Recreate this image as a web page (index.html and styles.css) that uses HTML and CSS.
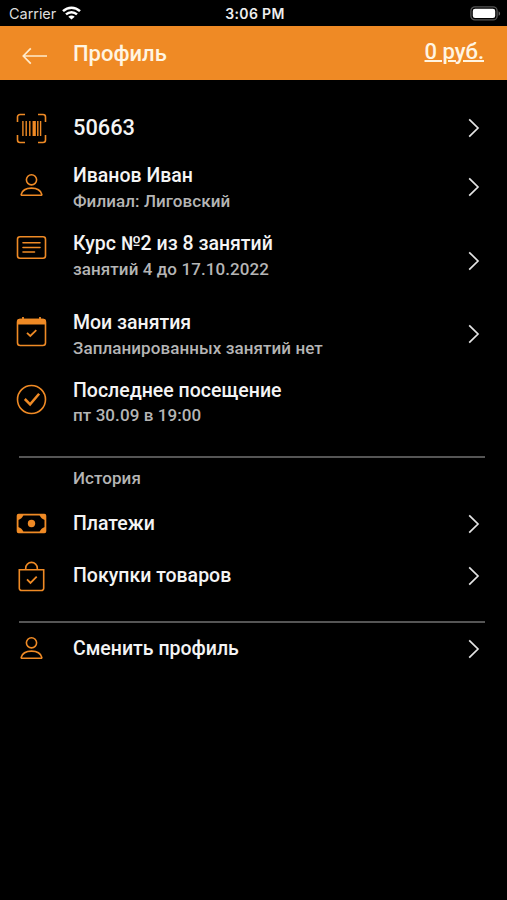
FILE: index.html
```html
<!DOCTYPE html>
<html lang="ru">
<head>
<meta charset="utf-8">
<title>Профиль</title>
<link rel="stylesheet" href="styles.css">
</head>
<body>
<svg width="0" height="0" class="defs">
  <symbol id="chevron" viewBox="0 0 12 20"><path d="M1.2 1.3 10 10 1.2 18.7"/></symbol>
  <symbol id="person" viewBox="0 0 31 31"><circle cx="15.500" cy="9.800" r="5.100"/><path d="M5.800 25.200c-.4 0-.7-.3-.6-.8 1-3.900 5-6.300 10.300-6.300s9.300 2.400 10.300 6.300c.1.500-.2.800-.6.800z"/></symbol>
</svg>
<div class="status">
  <div class="carrier"><span>Carrier</span>
    <svg class="wifi" width="19" height="14" viewBox="0 0 19 14"><path d="M1 5.200C5.900.5 13.100.5 18 5.200" /><path d="M4 8.400c3.200-2.900 7.800-2.900 11 0"/><path class="dot" d="M9.500 13.600 6.300 10.700c1.800-1.600 4.600-1.600 6.400 0z"/></svg>
  </div>
  <div class="time">3:06 PM</div>
  <svg class="battery" width="31" height="15" viewBox="0 0 31 15"><rect class="shell" x=".9" y=".9" width="26.200" height="13" rx="4"/><rect class="charge" x="2.800" y="2.700" width="22.400" height="9.400" rx="2.300"/><path class="cap" d="M28.600 5.200c2 .9 2 3.700 0 4.600z"/></svg>
</div>
<header class="bar">
  <svg class="back" width="26" height="18" viewBox="0 0 26 18"><path d="M8.800 1.300 1.300 9l7.500 7.700M1.300 9H25"/></svg>
  <h1>Профиль</h1>
  <a class="balance">0 руб.</a>
</header>
<main>
  <div class="row code">
    <svg class="icon" viewBox="0 0 31 31"><path d="M1.500 9V4a2.500 2.500 0 0 1 2.500-2.500h5M22 1.500h5A2.500 2.500 0 0 1 29.500 4v5M29.500 22v5a2.500 2.500 0 0 1-2.500 2.500h-5M9 29.500H4A2.500 2.500 0 0 1 1.500 27v-5"/><path d="M6.900 8v15M10.200 8v15M13.800 8v15M21.800 8v15M24.600 8v15" stroke-width="1.400"/><path d="M18.200 8v15" stroke-width="3.300"/></svg>
    <div class="text"><b>50663</b></div>
    <svg class="arrow"><use href="#chevron"/></svg>
  </div>
  <div class="row client">
    <svg class="icon"><use href="#person"/></svg>
    <div class="text"><b>Иванов Иван</b><small>Филиал: Лиговский</small></div>
    <svg class="arrow"><use href="#chevron"/></svg>
  </div>
  <div class="row course">
    <svg class="icon" viewBox="0 0 31 31"><rect x="1.500" y="4.800" width="28" height="21.500" rx="2.500"/><path d="M7 10.800h17M7 15.500h17M7 20h11.500" stroke-linecap="round"/></svg>
    <div class="text"><b>Курс №2 из 8 занятий</b><small>занятий 4 до 17.10.2022</small></div>
    <svg class="arrow"><use href="#chevron"/></svg>
  </div>
  <div class="row lessons">
    <svg class="icon" viewBox="0 0 31 31"><rect x="1.500" y="3.500" width="28" height="26" rx="2.800"/><path class="solid" d="M1 8.500V5a2.500 2.500 0 0 1 2.500-2.300h2.600v-1.700h1.800v1.700h15.200v-1.700h1.800v1.700h2.600A2.500 2.500 0 0 1 30 5v3.500z"/><path d="m11 16.800 3.300 3.200 6-5.800" stroke-width="1.800"/></svg>
    <div class="text"><b>Мои занятия</b><small>Запланированных занятий нет</small></div>
    <svg class="arrow"><use href="#chevron"/></svg>
  </div>
  <div class="row visit">
    <svg class="icon" viewBox="0 0 31 31"><circle cx="15.500" cy="15.500" r="14"/><path d="m8.800 15 5.300 5.300 9-10.500" stroke-width="2.500"/></svg>
    <div class="text"><b>Последнее посещение</b><small>пт 30.09 в 19:00</small></div>
  </div>
  <hr>
  <h2>История</h2>
  <div class="row payments">
    <svg class="icon" viewBox="0 0 31 31"><rect x="1.600" y="6.700" width="27.800" height="17.600" rx="1" stroke-width="1.800"/><path class="solid" d="M2 7h5.500Q6 11 2 12zM29 7h-5.500q1.500 4 5.500 5zM2 24h5.500Q6 20 2 19zM29 24h-5.500q1.500-4 5.500-5z"/><circle class="solid" cx="15.500" cy="15.500" r="3.700"/></svg>
    <div class="text"><b>Платежи</b></div>
    <svg class="arrow"><use href="#chevron"/></svg>
  </div>
  <div class="row purchases">
    <svg class="icon" viewBox="0 0 31 31"><path d="M3.300 8.700h24.400v18.500a2.300 2.300 0 0 1-2.300 2.300H5.600a2.300 2.300 0 0 1-2.300-2.300zM9.700 8.500V7.200a5.800 5.800 0 0 1 11.600 0v1.300"/><path d="m11 18.300 3.500 3.600 6.200-6.200" stroke-width="1.800"/></svg>
    <div class="text"><b>Покупки товаров</b></div>
    <svg class="arrow"><use href="#chevron"/></svg>
  </div>
  <hr>
  <div class="row switch">
    <svg class="icon"><use href="#person"/></svg>
    <div class="text"><b>Сменить профиль</b></div>
    <svg class="arrow"><use href="#chevron"/></svg>
  </div>
</main>
</body>
</html>
```
FILE: styles.css
```css
* { box-sizing: border-box; }
body {
  margin: 0;
  height: 900px;
  overflow: hidden;
  background: #000;
  color: #f4f4f4;
  font-family: Roboto, sans-serif;
}
svg { fill: none; display: block; flex: none; }
.defs { display: none; }
.status {
  height: 26px;
  padding: 1px 6px 0 9px;
  display: grid;
  grid-template-columns: 1fr auto 1fr;
  align-items: center;
  font: 14.5px Inter, sans-serif;
  color: #ddd;
}
.carrier { display: flex; align-items: center; gap: 6px; letter-spacing: -.05px; }
.wifi { stroke: #fff; stroke-width: 2.5; margin-top: -2px; }
.wifi .dot { fill: #fff; stroke: none; }
.time { font-weight: 600; font-size: 14px; letter-spacing: .35px; color: #eee; }
.battery { justify-self: end; }
.shell { stroke: #555; stroke-width: 1.3; }
.charge { fill: #fff; }
.cap { fill: #666; }
.bar {
  height: 54px;
  padding: 0 23px 0 22px;
  background: #ef8a25;
  display: flex;
  align-items: center;
  color: #fff5e2;
}
.back { stroke: #ffebcc; stroke-width: 1.7; margin-top: 6px; }
h1 { margin: 2px auto 0 25px; font-size: 22px; font-weight: 500; line-height: 26px; }
.balance { font-size: 22px; font-weight: 500; line-height: 26px; margin-bottom: 3px; text-decoration: underline; text-decoration-thickness: 1.5px; text-underline-offset: 1px; }
main { padding-top: 22px; }
.row { display: flex; align-items: flex-start; height: 68px; padding: 8px 27px 0 16px; }
.icon { width: 31px; height: 31px; margin-right: 26px; stroke: #ef8a25; stroke-width: 1.6; }
.icon .solid { fill: #ef8a25; stroke: none; }
.text { flex: 1; display: flex; flex-direction: column; white-space: nowrap; }
.text b { font-size: 19.5px; font-weight: 500; line-height: 28px; }
.text small { font-size: 17px; font-weight: 500; line-height: 22px; color: #b5b5b5; letter-spacing: .08px; }
.arrow { width: 12px; height: 20px; stroke: #e4e4e4; stroke-width: 1.7; }
.code, .payments, .purchases, .switch { height: 52px; padding-top: 0; align-items: center; }
.code b { font-size: 21.8px; }
.client .icon { margin-top: 8px; }
.client .arrow { margin-top: 15px; }
.course { height: 78px; }
.course .icon { margin-top: 2px; }
.course .arrow { margin-top: 21px; }
.lessons .icon { margin-top: 8px; }
.lessons .text { margin-top: 1px; }
.lessons .arrow { margin-top: 16px; }
.visit .icon { margin-top: 8px; }
.visit .text { margin-top: 1px; }
.visit small { margin-top: -1px; }
hr { height: 2px; border: 0; background: #555; margin: 20px 22px 0 19px; }
h2 { margin: 7px 0; font-size: 17px; font-weight: 500; line-height: 26px; padding-left: 73px; letter-spacing: .08px; color: #b5b5b5; }
.payments { height: 51px; }
.purchases { margin-top: 1px; }
.purchases .arrow { margin-top: -1px; }
.purchases + hr { margin-top: 19px; }
.switch { height: 51px; }
```
